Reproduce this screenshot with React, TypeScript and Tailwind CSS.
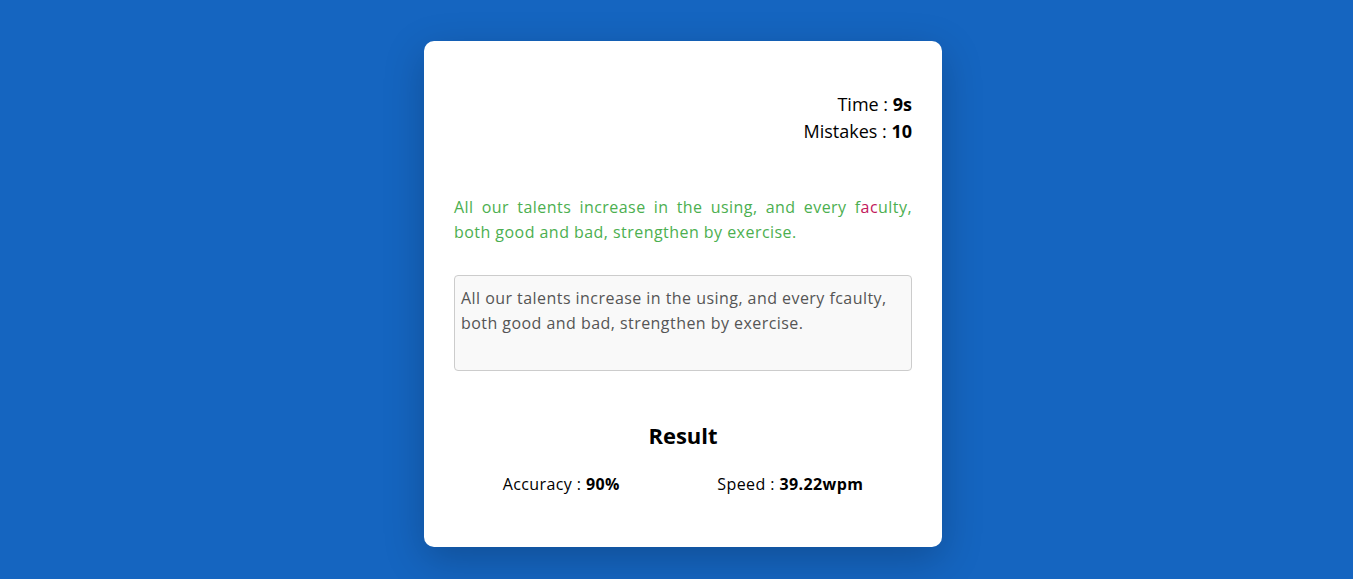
export default function App() {
  const quote = "All our talents increase in the using, and every faculty, both good and bad, strengthen by exercise.";
  const typed = "All our talents increase in the using, and every fcaulty, both good and bad, strengthen by exercise.";

  return (
    <div className="min-h-screen w-full bg-[#1565c0] font-['Open_Sans',sans-serif]">
      <div className="flex justify-center pl-[13px] pt-[41px]">
        <div className="w-[518px] rounded-[10px] bg-white px-[30px] pb-[51px] pt-[50px] shadow-[0_12px_40px_rgba(0,0,0,0.22)]">
          <div className="text-right text-[18px] leading-[27px] text-black">
            <p>
              Time : <span className="font-bold">9s</span>
            </p>
            <p>
              Mistakes : <span className="font-bold">10</span>
            </p>
          </div>

          <p className="mt-[50px] text-justify text-[16px] leading-[25px] tracking-[0.45px] text-[#4caf50]">
            {quote.split("").map((ch, i) => (
              <span key={i} className={ch !== typed[i] ? "text-[#c2185b]" : undefined}>
                {ch}
              </span>
            ))}
          </p>

          <textarea
            readOnly
            value={typed}
            className="mt-[30px] block h-[96px] w-full resize-none rounded-[4px] border border-[#cccccc] bg-[#f9f9f9] px-[6px] py-[10px] text-[16px] leading-[25px] tracking-[0.45px] text-[#555555] outline-none"
          />

          <h2 className="mt-[48px] text-center text-[22px] font-bold leading-[33px] text-black">Result</h2>

          <div className="mt-[20px] flex justify-around text-[16px] leading-[24px] tracking-[0.4px] text-black">
            <p>
              Accuracy : <span className="font-bold">90%</span>
            </p>
            <p>
              Speed : <span className="font-bold">39.22wpm</span>
            </p>
          </div>
        </div>
      </div>
    </div>
  );
}
